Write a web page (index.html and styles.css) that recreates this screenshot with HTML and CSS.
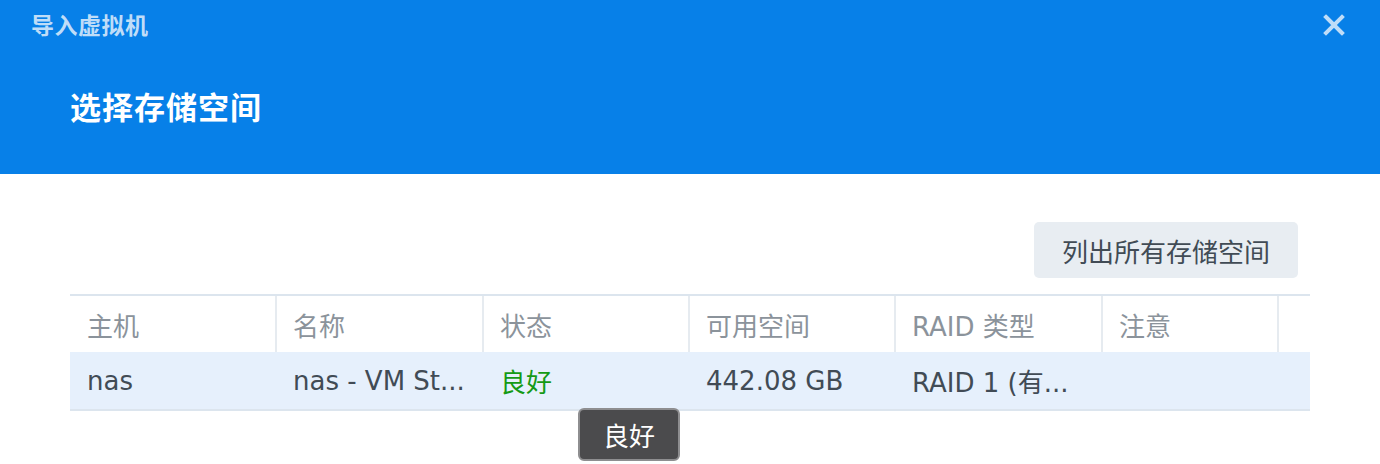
FILE: index.html
```html
<!DOCTYPE html>
<html lang="zh-CN">
<head>
<meta charset="utf-8">
<title>导入虚拟机</title>
<link rel="stylesheet" href="styles.css">
</head>
<body>
<div class="dialog">
  <header class="head">
    <div class="topbar">
      <span class="app-title">导入虚拟机</span>
      <span class="close" aria-label="关闭">
        <svg width="22" height="22" viewBox="0 0 22 22"><path d="M3 3 L19 19 M19 3 L3 19" stroke="#BFDDF8" stroke-width="4" stroke-linecap="square"/></svg>
      </span>
    </div>
    <h1 class="step-title">选择存储空间</h1>
  </header>
  <main class="body">
    <div class="toolbar">
      <button class="btn">列出所有存储空间</button>
    </div>
    <div class="grid">
      <div class="row head-row">
        <div class="cell">主机</div>
        <div class="cell">名称</div>
        <div class="cell">状态</div>
        <div class="cell">可用空间</div>
        <div class="cell">RAID 类型</div>
        <div class="cell">注意</div>
        <div class="cell last"></div>
      </div>
      <div class="row data-row">
        <div class="cell">nas</div>
        <div class="cell">nas - VM St...</div>
        <div class="cell ok">良好</div>
        <div class="cell">442.08 GB</div>
        <div class="cell">RAID 1 (有...</div>
        <div class="cell"></div>
        <div class="cell last"></div>
      </div>
    </div>
  </main>
  <div class="tooltip">良好</div>
</div>
</body>
</html>
```
FILE: styles.css
```css
html, body {
  margin: 0;
  padding: 0;
  background: #ffffff;
}
body {
  font-family: "DejaVu Sans", "Noto Sans CJK SC", sans-serif;
  width: 1380px;
  height: 464px;
  overflow: hidden;
}
.dialog {
  position: relative;
  width: 1380px;
  height: 464px;
}
.head {
  background: #0780E8;
  height: 174px;
  box-sizing: border-box;
  padding: 9px 0 0 0;
}
.topbar {
  display: flex;
  justify-content: space-between;
  align-items: center;
  padding: 0 35px 0 31px;
  height: 30px;
}
.app-title {
  font-family: "Noto Sans CJK SC", sans-serif;
  font-weight: 700;
  font-size: 23px;
  color: #BFDDF8;
  letter-spacing: 0.5px;
}
.close {
  display: flex;
  width: 22px;
  height: 22px;
  margin-top: 2px;
}
.step-title {
  margin: 0;
  padding: 0 0 0 70px;
  margin-top: 48px;
  font-family: "Noto Sans CJK SC", sans-serif;
  font-weight: 700;
  font-size: 31px;
  line-height: 38px;
  color: #ffffff;
  letter-spacing: 1px;
}
.body {
  padding: 48px 70px 0 70px;
}
.toolbar {
  display: flex;
  justify-content: flex-end;
  padding-right: 12px;
}
.btn {
  width: 264px;
  height: 56px;
  border: none;
  border-radius: 5px;
  background: #E8EDF2;
  color: #414B55;
  font-family: "Noto Sans CJK SC", sans-serif;
  font-size: 26px;
  padding: 0;
  letter-spacing: 0;
}
.grid {
  margin-top: 16px;
  border-top: 2px solid #DCE5EE;
  border-bottom: 2px solid #DCE5EE;
}
.row {
  display: grid;
  grid-template-columns: 207px 207px 206px 206px 207px 176px 1fr;
}
.head-row {
  height: 56px;
}
.head-row .cell {
  border-right: 2px solid #E6EBF0;
  color: #8B939B;
}
.head-row .cell.last {
  border-right: none;
}
.data-row {
  height: 57px;
  background: #E6F0FC;
}
.cell {
  display: flex;
  align-items: center;
  padding-left: 17px;
  font-size: 26px;
  color: #414B55;
  white-space: nowrap;
  overflow: hidden;
}
.row .cell:not(:first-child) {
  padding-left: 16px;
}
.cell.ok {
  color: #159A15;
}
.tooltip {
  position: absolute;
  left: 578px;
  top: 408px;
  width: 102px;
  height: 53px;
  box-sizing: border-box;
  border: 2px solid #8E8E90;
  border-radius: 6px;
  background: #4B4B4D;
  color: #ffffff;
  font-family: "Noto Sans CJK SC", sans-serif;
  font-size: 26px;
  display: flex;
  align-items: center;
  justify-content: center;
}
```
